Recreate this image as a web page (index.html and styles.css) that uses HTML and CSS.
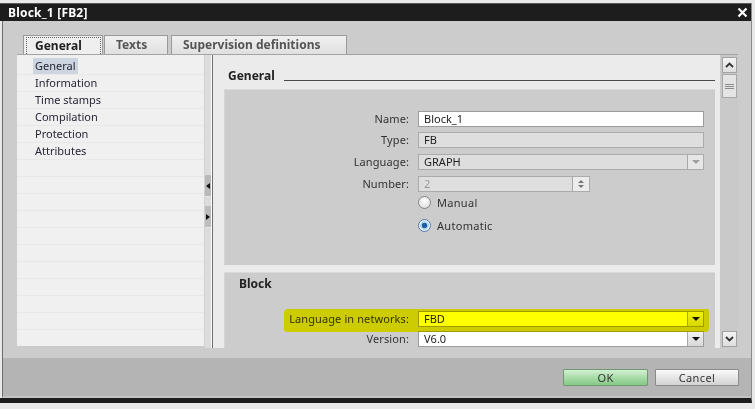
FILE: index.html
```html
<!DOCTYPE html>
<html lang="en">
<head>
<meta charset="utf-8">
<title>Block_1 [FB2]</title>
<link rel="stylesheet" href="styles.css">
</head>
<body>
<div class="dialog">
  <div class="titlebar">
    <span class="title">Block_1 [FB2]</span>
    <svg class="close" width="11" height="11" viewBox="0 0 11 11"><path d="M1.5 1.5 L9.5 9.5 M9.5 1.5 L1.5 9.5" stroke="#fff" stroke-width="2.2" fill="none"/></svg>
  </div>
  <div class="main">
    <div class="tabs">
      <div class="tab active t-general"><span class="focus">General</span></div>
      <div class="tab t-texts">Texts</div>
      <div class="tab t-sup">Supervision definitions</div>
    </div>
    <div class="frame">
      <div class="nav">
        <div class="nrow"><span class="sel">General</span></div>
        <div class="nrow">Information</div>
        <div class="nrow">Time stamps</div>
        <div class="nrow">Compilation</div>
        <div class="nrow">Protection</div>
        <div class="nrow">Attributes</div>
        <div class="nrow"></div><div class="nrow"></div><div class="nrow"></div>
        <div class="nrow"></div><div class="nrow"></div><div class="nrow"></div>
        <div class="nrow"></div><div class="nrow"></div><div class="nrow"></div>
        <div class="nrow"></div><div class="nrow"></div><div class="nrow"></div>
      </div>
      <div class="splitter">
        <div class="sbtn"><span class="tri-left"></span></div>
        <div class="sbtn s2"><span class="tri-right"></span></div>
      </div>
      <div class="divider"></div>
      <div class="panel">
        <div class="heading"><span>General</span><span class="hline"></span></div>
        <div class="section general">
          <div class="row r-name"><label>Name:</label><div class="field white">Block_1</div></div>
          <div class="row r-type"><label>Type:</label><div class="field grey">FB</div></div>
          <div class="row r-lang"><label>Language:</label><div class="field grey sel-field"><span class="val">GRAPH</span><span class="ddbtn disabled"><span class="tri-down light"></span></span></div></div>
          <div class="row r-num"><label>Number:</label><div class="field grey numfield"><span class="val dim">2</span><span class="spin"><span class="tri-up small"></span><span class="tri-down small"></span></span></div></div>
          <div class="row r-manual"><span></span><div class="radio-line"><span class="radio"></span>Manual</div></div>
          <div class="row r-auto"><span></span><div class="radio-line"><span class="radio checked"></span>Automatic</div></div>
        </div>
        <div class="section block">
          <div class="sec-title">Block</div>
          <div class="row r-lin"><label>Language in networks:</label><div class="field white sel-field"><span class="val">FBD</span><span class="ddbtn"><span class="tri-down"></span></span></div></div>
          <div class="row r-ver"><label>Version:</label><div class="field white sel-field"><span class="val">V6.0</span><span class="ddbtn"><span class="tri-down"></span></span></div></div>
          <span class="marker"></span>
        </div>
      </div>
      <div class="scrollbar">
        <div class="sb-btn"><svg width="9" height="6" viewBox="0 0 9 6"><path d="M1 5 L4.5 1.5 L8 5" stroke="#333" stroke-width="1.8" fill="none"/></svg></div>
        <div class="sb-thumb"><span></span><span></span><span></span></div>
        <div class="sb-track"></div>
        <div class="sb-btn"><svg width="9" height="6" viewBox="0 0 9 6"><path d="M1 1 L4.5 4.5 L8 1" stroke="#333" stroke-width="1.8" fill="none"/></svg></div>
      </div>
    </div>
  </div>
  <div class="footer">
    <button class="btn ok">OK</button>
    <button class="btn cancel">Cancel</button>
  </div>
</div>
</body>
</html>
```
FILE: styles.css
```css
* { box-sizing: border-box; }
html, body { margin: 0; padding: 0; }
body {
  width: 755px;
  height: 409px;
  overflow: hidden;
  background: #e9e9e9;
  padding-top: 3px;
  font-family: "Noto Sans", "DejaVu Sans", sans-serif;
  font-size: 11px;
  color: #2a2a2a;
}
.dialog {
  width: 752px;
  border-right: 1px solid #8a8a8a;
  border-bottom: 5px solid #1c1c1c;
}
.titlebar {
  height: 18px;
  background: #1d1d1d;
  border-top: 1px solid #5a5a5a;
  display: flex;
  align-items: center;
  justify-content: space-between;
  padding: 0 3px 0 8px;
  color: #fff;
  font-weight: bold;
  font-size: 12px;
}
.title { letter-spacing: 0.2px; }
.close { display: block; }

.main {
  margin-left: 2px;
  border-left: 1px solid #6c6c6c;
  background: #cccccc;
  height: 337px;
  padding-top: 14px;
}
.tabs {
  display: flex;
  margin-left: 20px;
  height: 19px;
}
.tab {
  height: 19px;
  border: 1px solid #9a9a9a;
  border-bottom: none;
  background: linear-gradient(#f0f0f0, #e0e0e0);
  font-weight: bold;
  font-size: 12px;
  color: #555;
  padding-left: 11px;
  line-height: 17px;
  margin-right: 1px;
}
.t-general { width: 80px; }
.t-texts { width: 64px; margin-right: 3px; }
.t-sup { width: 176px; }
.tab.active {
  background: #efefef;
  color: #222;
  padding: 1px 1px 0 2px;
  line-height: 15px;
}
.focus {
  display: block;
  height: 17px;
  border: 1px dotted #666;
  border-bottom: none;
  padding-left: 8px;
}

.frame {
  margin-left: 14px;
  width: 721px;
  height: 294px;
  border-top: 1px solid #a4a4a4;
  display: flex;
}
.nav {
  width: 188px;
  height: 291px;
  background: #f0f0f0;
  border-right: 1px solid #d2d2d2;
  padding-top: 3px;
  overflow: hidden;
}
.nrow {
  height: 17px;
  border-bottom: 1px solid #e8e8e8;
  padding-left: 18px;
  line-height: 16px;
  color: #262636;
}
.sel {
  display: inline-block;
  background: #cdd5e0;
  padding: 0 2px;
  margin-left: -2px;
  height: 16px;
}
.splitter {
  width: 6px;
  background: #dcdcdc;
  padding-top: 120px;
}
.sbtn {
  height: 22px;
  background: #b9b9b9;
  border-bottom: 1px solid #e8e8e8;
  display: flex;
  align-items: center;
  justify-content: center;
}
.sbtn.s2 { margin-top: 9px; background: #bdbdbd; }
.tri-left {
  width: 0; height: 0;
  border-top: 3px solid transparent;
  border-bottom: 3px solid transparent;
  border-right: 4px solid #111;
}
.tri-right {
  width: 0; height: 0;
  border-top: 3px solid transparent;
  border-bottom: 3px solid transparent;
  border-left: 4px solid #111;
}
.divider {
  width: 2px;
  border-left: 1px solid #ffffff;
  background: #6e6e6e;
}
.panel {
  width: 507px;
  height: 293px;
  background: #ebebeb;
  overflow: hidden;
  padding: 0 5px 0 11px;
}
.heading {
  height: 34px;
  display: flex;
  align-items: flex-end;
  padding: 0 0 6px 4px;
  font-weight: bold;
  font-size: 12px;
  line-height: 15px;
  color: #222;
}
.hline {
  flex: 1;
  margin-left: 9px;
  margin-bottom: 2px;
  border-bottom: 1px solid #4a4a4a;
}
.section {
  background: #cccccc;
  border-top: 1px solid #dadada;
  border-left: 1px solid #d6d6d6;
  position: relative;
}
.section.general {
  height: 176px;
  padding-top: 21px;
}
.section.block {
  margin-top: 7px;
  height: 120px;
  padding-top: 3px;
}
.sec-title {
  padding-left: 14px;
  font-weight: bold;
  font-size: 12px;
  line-height: 16px;
  color: #222;
}
.row {
  display: grid;
  grid-template-columns: 184px 286px;
  column-gap: 9px;
  height: 16px;
  align-items: center;
}
.row label {
  text-align: right;
  color: #333;
  letter-spacing: 0.1px;
  line-height: 16px;
}
.r-type { margin-top: 5px; }
.r-lang { margin-top: 6px; }
.r-num { margin-top: 6px; }
.r-manual { margin-top: 2px; }
.r-auto { margin-top: 7px; }
.r-lin { margin-top: 19px; position: relative; z-index: 0; }
.r-ver { margin-top: 4px; }

.field {
  height: 16px;
  border: 1px solid #9c9c9c;
  padding-left: 5px;
  line-height: 14px;
  color: #222;
  display: flex;
  align-items: center;
}
.field.white { background: #ffffff; }
.field.grey { background: #dedede; border-color: #ababab; }
.val { flex: 1; }
.dim { color: #9a9a9a; }
.ddbtn {
  width: 16px;
  height: 14px;
  border-left: 1px solid #a8a8a8;
  background: linear-gradient(#f2f2f2, #d8d8d8);
  display: flex;
  align-items: center;
  justify-content: center;
}
.ddbtn.disabled { background: #e6e6e6; }
.tri-down {
  width: 0; height: 0;
  border-left: 4px solid transparent;
  border-right: 4px solid transparent;
  border-top: 4px solid #111;
}
.tri-down.light { border-top-color: #a0a0a0; }
.tri-up {
  width: 0; height: 0;
  border-left: 4px solid transparent;
  border-right: 4px solid transparent;
  border-bottom: 4px solid #555;
}
.tri-up.small, .tri-down.small {
  border-left-width: 3px;
  border-right-width: 3px;
}
.tri-up.small { border-bottom: 3px solid #777; }
.tri-down.small { border-top: 3px solid #777; }
.numfield { width: 172px; }
.spin {
  width: 17px;
  height: 14px;
  border-left: 1px solid #a8a8a8;
  background: #ececec;
  display: flex;
  flex-direction: column;
  align-items: center;
  justify-content: center;
  gap: 2px;
}
.radio-line {
  display: flex;
  align-items: center;
  gap: 6px;
  color: #333;
  letter-spacing: 0.3px;
}
.radio {
  width: 13px;
  height: 13px;
  border-radius: 50%;
  border: 1px solid #858585;
  background: radial-gradient(circle at 50% 35%, #ffffff, #d6d6d6);
}
.radio.checked {
  border-color: #4a7db5;
  background: radial-gradient(circle, #1c5ea8 0 2.5px, #a9d2f3 3px 4px, #f2f2f2 4.5px);
}
.marker {
  position: absolute;
  left: 59px;
  top: 36px;
  width: 425px;
  height: 23px;
  background: #ffff00;
  mix-blend-mode: multiply;
  border-radius: 4px 2px 4px 3px;
  z-index: 1;
}

.scrollbar {
  width: 18px;
  height: 293px;
  background: #c9c9c9;
  padding: 2px 1px 1px 2px;
  display: flex;
  flex-direction: column;
}
.sb-btn {
  height: 16px;
  background: linear-gradient(#f4f4f4, #dedede);
  border: 1px solid #a2a2a2;
  display: flex;
  align-items: center;
  justify-content: center;
}
.sb-thumb {
  height: 24px;
  margin-top: 1px;
  background: #e4e4e4;
  border: 1px solid #a8a8a8;
  display: flex;
  flex-direction: column;
  align-items: center;
  justify-content: center;
  gap: 1px;
}
.sb-thumb span {
  width: 9px;
  height: 1px;
  background: #8a8a8a;
}
.sb-track { flex: 1; }

.footer {
  margin-left: 2px;
  border-left: 1px solid #6c6c6c;
  height: 40px;
  background: #b4b4b4;
  border-bottom: 2px solid #c2c2c2;
  display: flex;
  justify-content: flex-end;
  align-items: flex-start;
  padding: 11px 12px 0 0;
  gap: 7px;
}
.btn {
  height: 17px;
  font-family: "Noto Sans", "DejaVu Sans", sans-serif;
  font-size: 11px;
  color: #333;
  padding: 0;
  line-height: 14px;
  letter-spacing: 0.4px;
  border-radius: 1px;
}
.btn.ok {
  width: 85px;
  border: 1px solid #6f9a6f;
  background: linear-gradient(#d4f0d4, #a8dca8 50%, #86c886);
}
.btn.cancel {
  width: 84px;
  border: 1px solid #8a8a8a;
  background: linear-gradient(#fafafa, #e6e6e6 50%, #d2d2d2);
}
```
